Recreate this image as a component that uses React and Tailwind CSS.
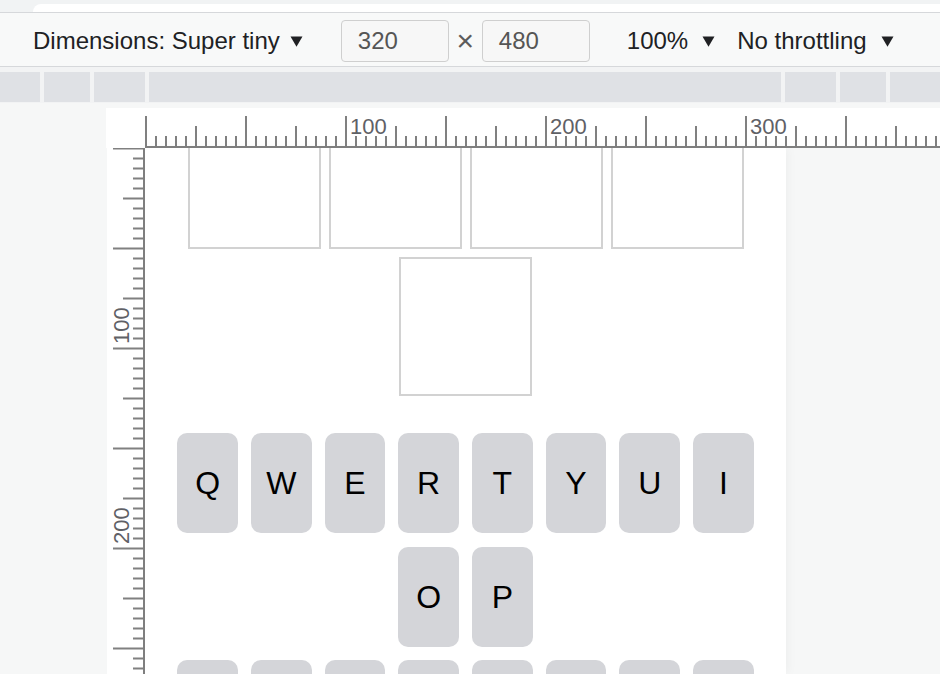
import React from 'react';

const FONT = { fontFamily: '"Liberation Sans", Arial, Helvetica, sans-serif' };

const ROWS = [
  ['Q', 'W', 'E', 'R', 'T', 'Y', 'U', 'I', 'O', 'P'],
  ['', '', '', '', '', '', '', ''],
];

function Caret() {
  return (
    <svg width="13" height="11" viewBox="0 0 13 11" className="shrink-0">
      <path d="M0.5 0.5 L12.5 0.5 L6.5 10.8 Z" fill="#202124" />
    </svg>
  );
}

function TopRuler() {
  const ticks = Array.from({ length: 80 }, (_, k) => k);
  return (
    <svg width="834" height="40" className="block">
      <rect x="39" y="38" width="800" height="2" fill="#808080" />
      {ticks.map(k => {
        const top = k % 10 === 0 ? 8 : k % 5 === 0 ? 18 : 28;
        return <rect key={k} x={39 + k * 10} y={top} width="2" height={40 - top} fill="#808080" />;
      })}
      {[20, 40, 60].map(k => (
        <text key={k} x={44 + k * 10} y="26" fontSize="22" fill="#5f6166" style={FONT}>
          {k * 5}
        </text>
      ))}
    </svg>
  );
}

function SideRuler() {
  const ticks = Array.from({ length: 53 }, (_, k) => k);
  return (
    <svg width="38" height="526" className="block">
      <rect x="36" y="0" width="2" height="526" fill="#808080" />
      {ticks.map(k => {
        const left = k % 10 === 0 ? 6 : k % 5 === 0 ? 16 : 26;
        return <rect key={k} x={left} y={k * 10 - 0.5} width={38 - left} height="2" fill="#808080" />;
      })}
      {[20, 40].map(k => (
        <text key={k} transform={`translate(21.8 ${k * 10 - 4}) rotate(-90)`} fontSize="22" fill="#5f6166" style={FONT}>
          {k * 5}
        </text>
      ))}
    </svg>
  );
}

function Box() {
  return <div className="w-[133px] h-[139px] border-2 border-[#d2d2d2] bg-white" />;
}

function Key({ ch }) {
  return (
    <div className="w-[60.5px] h-[100px] rounded-[10px] bg-[#d4d5d9] flex items-center justify-center text-[32px] text-black">
      {ch}
    </div>
  );
}

export default function App() {
  return (
    <div className="w-full h-[674px] overflow-hidden flex flex-col bg-[#f6f7f7]" style={FONT}>
      {/* browser chrome edge */}
      <div className="h-[12px] bg-[#f1f3f4] flex">
        <div className="ml-[33px] mt-[4px] flex-1 bg-white rounded-tl-[10px]" />
      </div>
      <div className="h-[55px] bg-[#f8f9f9] border-y border-[#d6d8db] flex items-center pt-[3px] text-[24px] text-[#202124]">
        <div className="ml-[33px] flex items-center gap-[10px]">
          <span>Dimensions: Super tiny</span>
          <Caret />
        </div>
        <div className="ml-[38px] w-[108px] h-[42px] border border-[#cfcfcf] rounded-[4px] bg-[#f7f7f7] flex items-center pl-[16px] text-[#555]">
          320
        </div>
        <span className="w-[33px] text-center text-[30px] leading-none text-[#5c5c5c]">×</span>
        <div className="w-[108px] h-[42px] border border-[#cfcfcf] rounded-[4px] bg-[#f7f7f7] flex items-center pl-[16px] text-[#555]">
          480
        </div>
        <div className="ml-[37px] flex items-center gap-[14px]">
          <span>100%</span>
          <Caret />
        </div>
        <div className="ml-[22px] flex items-center gap-[14px]">
          <span>No throttling</span>
          <Caret />
        </div>
      </div>

      {/* media query bars */}
      <div className="h-[36px] bg-[#f2f3f4] pt-[5px] pb-[1px] flex gap-[4px]">
        <div className="w-[40px] bg-[#dfe1e5]" />
        <div className="w-[46px] bg-[#dfe1e5]" />
        <div className="w-[51px] bg-[#dfe1e5]" />
        <div className="flex-1 bg-[#dfe1e5]" />
        <div className="w-[51px] bg-[#dfe1e5]" />
        <div className="w-[46px] bg-[#dfe1e5]" />
        <div className="w-[50px] bg-[#dfe1e5]" />
      </div>

      <div className="h-[5px]" />

      {/* top ruler */}
      <div className="h-[40px] flex">
        <div className="w-[106px]" />
        <div className="flex-1 bg-white">
          <TopRuler />
        </div>
      </div>

      {/* viewport row */}
      <div className="flex-1 flex min-h-0">
        <div className="w-[107px]" />
        <div className="w-[38px] bg-white">
          <SideRuler />
        </div>
        <div className="w-[641px] bg-white overflow-hidden shadow-[2px_0_10px_rgba(0,0,0,0.04)]">
          <div className="-mt-[38px]">
            <div className="flex flex-wrap justify-center gap-[8px]">
              <Box />
              <Box />
              <Box />
              <Box />
              <Box />
            </div>
            <div className="mt-[37.3px] flex flex-col gap-[13.3px]">
              {ROWS.map((row, i) => (
                <div key={i} className="flex flex-wrap justify-center gap-x-[13.2px] gap-y-[13.3px]">
                  {row.map((ch, j) => <Key key={j} ch={ch} />)}
                </div>
              ))}
            </div>
          </div>
        </div>
        <div className="flex-1" />
      </div>
    </div>
  );
}
